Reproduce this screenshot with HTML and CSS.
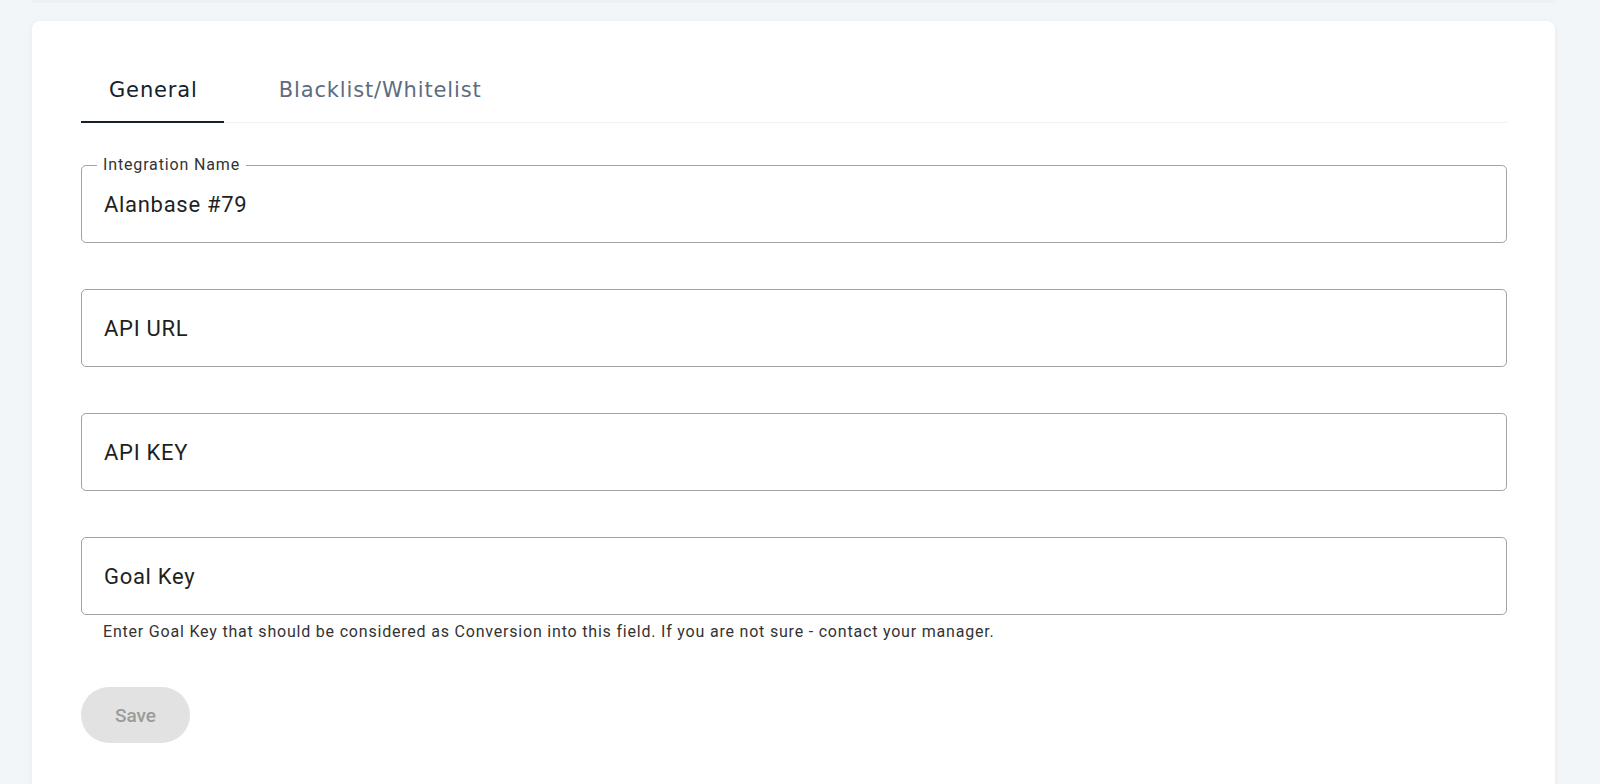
FILE: index.html
```html
<!DOCTYPE html>
<html lang="en">
<head>
<meta charset="UTF-8">
<meta name="viewport" content="width=device-width, initial-scale=1.0">
<title>Integration</title>
<link rel="stylesheet" href="styles.css">
</head>
<body>
<div class="prev-card"></div>
<div class="card">
    <div class="tabs">
        <div class="tab active">General</div>
        <div class="tab">Blacklist/Whitelist</div>
    </div>

    <div class="form">
        <div class="field">
            <span class="field-label">Integration Name</span>
            <span class="field-value">Alanbase #79</span>
        </div>
        <div class="field">
            <span class="field-value">API URL</span>
        </div>
        <div class="field">
            <span class="field-value">API KEY</span>
        </div>
        <div class="field-group">
            <div class="field">
                <span class="field-value">Goal Key</span>
            </div>
            <p class="helper">Enter Goal Key that should be considered as Conversion into this field. If you are not sure - contact your manager.</p>
        </div>
    </div>

    <button class="save" disabled>Save</button>
</div>
</body>
</html>
```

FILE: styles.css
```css
body {
    margin: 0;
    padding: 0;
    background-color: #f3f6f9;
    font-family: Roboto, "Liberation Sans", sans-serif;
    overflow: hidden;
}

.prev-card {
    height: 3px;
    margin: 0 44px 0 32px;
    background-color: #eef1f4;
}

.card {
    margin: 18px 0 0 32px;
    width: 1523px;
    height: 800px;
    box-sizing: border-box;
    padding: 46px 48px 0 49px;
    background-color: #fff;
    border-radius: 8px;
    box-shadow: 0 1px 6px rgba(0, 0, 0, 0.05);
}

/* Tabs */
.tabs {
    display: flex;
    gap: 27px;
    border-bottom: 1px solid #f2f2f2;
}

.tab {
    padding: 11px 26px 19px 28px;
    margin-bottom: -1px;
    font-family: "DejaVu Sans", sans-serif;
    font-size: 21px;
    line-height: 24px;
    letter-spacing: 0.85px;
    color: #5d6c80;
    border-bottom: 2px solid transparent;
}

.tab.active {
    color: #16202b;
    border-bottom-color: #16202b;
}

/* Form */
.form {
    display: flex;
    flex-direction: column;
    gap: 46px;
    margin-top: 42px;
}

.field {
    position: relative;
    display: flex;
    align-items: center;
    height: 78px;
    box-sizing: border-box;
    padding: 0 22px;
    border: 1px solid #a3a3a3;
    border-radius: 5px;
}

.field-label {
    position: absolute;
    top: -10px;
    left: 15px;
    padding: 0 6px;
    background-color: #fff;
    font-size: 16px;
    line-height: 18px;
    letter-spacing: 0.85px;
    color: #333;
}

.field-value {
    font-size: 22px;
    letter-spacing: 0.7px;
    color: #1f1f1f;
}

.helper {
    margin: 7px 0 0 22px;
    font-size: 16px;
    line-height: 20px;
    letter-spacing: 0.8px;
    color: #333;
}

.save {
    margin-top: 45px;
    width: 109px;
    height: 56px;
    border: none;
    border-radius: 28px;
    background-color: #e2e2e2;
    color: #9b9b9b;
    font-family: Roboto, sans-serif;
    font-size: 19px;
    font-weight: 500;
}
```
